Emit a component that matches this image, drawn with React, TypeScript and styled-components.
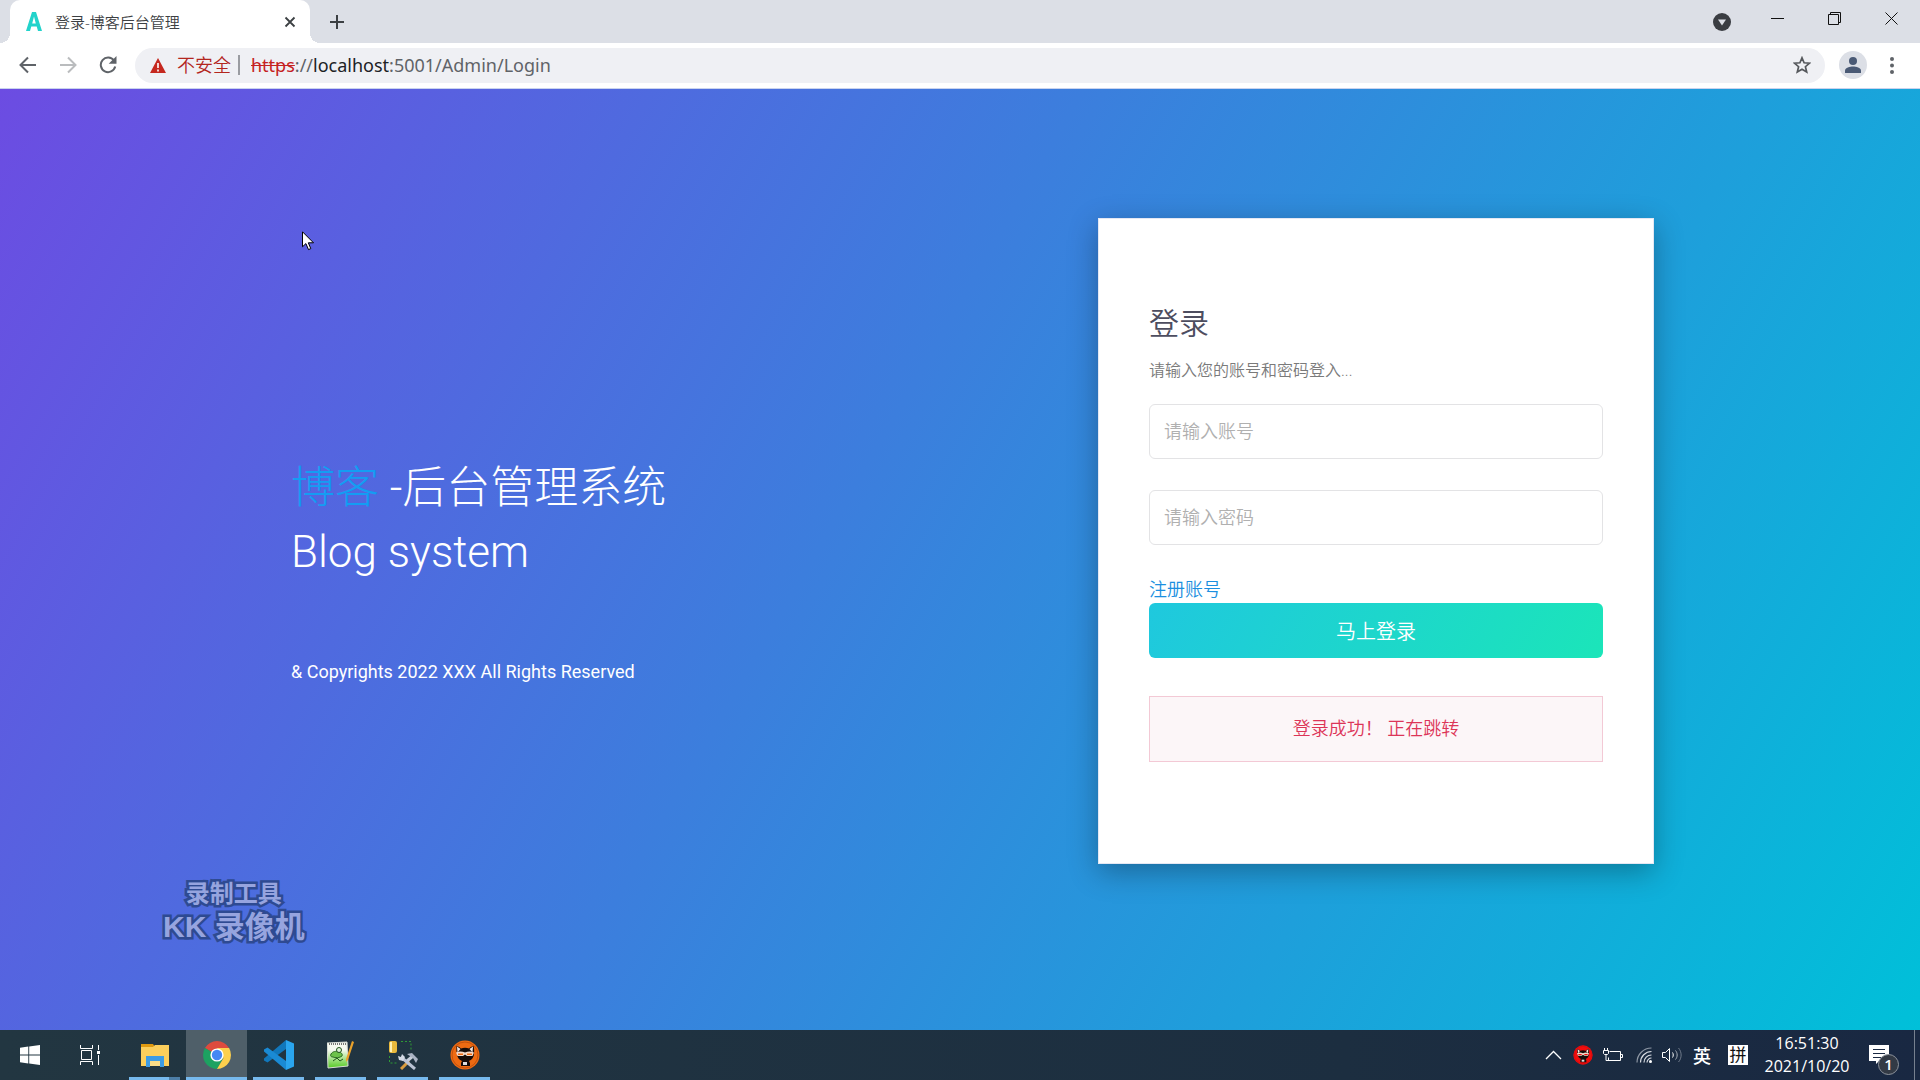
import React from "react";
import styled, { createGlobalStyle, css } from "styled-components";

const uiFont = `"Open Sans", "Noto Sans CJK SC", sans-serif`;
const pageFont = `Roboto, "Noto Sans CJK SC", sans-serif`;

const GlobalStyle = createGlobalStyle`
  * { box-sizing: border-box; }
  body { margin: 0; font-family: ${uiFont}; }
  button { border: 0; padding: 0; background: none; font-family: inherit; cursor: pointer; }
`;

const Screen = styled.div`
  position: relative;
  display: flex;
  flex-direction: column;
  min-height: 100vh;
`;

/* ---------- browser chrome ---------- */

const TabStrip = styled.header`
  display: flex;
  align-items: stretch;
  height: 43px;
  padding-left: 10px;
  background: #dcdfe6;
`;

const Tab = styled.div`
  position: relative;
  display: flex;
  align-items: center;
  gap: 11px;
  width: 300px;
  padding: 0 14px 0 15px;
  border-radius: 10px 10px 0 0;
  background: #fff;
  color: #3c4043;
  font-size: 15px;

  &::before,
  &::after {
    content: "";
    position: absolute;
    bottom: 0;
    width: 10px;
    height: 10px;
  }
  &::before {
    left: -10px;
    background: radial-gradient(circle at 0 0, transparent 10px, #fff 10px);
  }
  &::after {
    right: -10px;
    background: radial-gradient(circle at 100% 0, transparent 10px, #fff 10px);
  }
`;

const TabTitle = styled.span`
  flex: 1;
  font-weight: 350;
  line-height: 20px;
  white-space: nowrap;
`;

const IconButton = styled.button<{ $size: number; $height?: number }>`
  display: flex;
  flex: none;
  align-items: center;
  justify-content: center;
  width: ${(p) => p.$size}px;
  height: ${(p) => p.$height ?? p.$size}px;
`;

const NewTab = styled.div`
  display: flex;
  flex: 1;
  align-items: center;
  padding-left: 15px;
`;

const WindowControls = styled.div`
  display: flex;
  align-items: flex-start;
`;

const Toolbar = styled.nav`
  display: flex;
  align-items: center;
  height: 46px;
  padding: 0 13px 1px 8px;
  border-bottom: 1px solid #c9d3ee;
  background: #fff;
`;

const Omnibox = styled.div`
  display: flex;
  flex: 1;
  align-items: center;
  height: 35px;
  margin: 0 14px 0 7px;
  padding: 0 8px 0 15px;
  border-radius: 18px;
  background: #eff0f4;
  font-size: 18px;
  line-height: 24px;
`;

const Insecure = styled.span`
  margin-left: 11px;
  color: #b3261e;
  font-weight: 350;
`;

const Separator = styled.span`
  width: 2px;
  height: 20px;
  margin: 0 11px 0 7px;
  background: #9a9ca1;
`;

const Address = styled.span`
  flex: 1;
  color: #5f6368;
  font-family: "Noto Sans", sans-serif;
  s { color: #c5221f; }
  b { color: #202124; font-weight: 400; }
`;

const Avatar = styled.button`
  display: flex;
  align-items: center;
  justify-content: center;
  width: 28px;
  height: 28px;
  margin-right: 10px;
  border-radius: 50%;
  background: #dcdfe6;
`;

/* ---------- login page ---------- */

const Page = styled.main`
  position: relative;
  flex: 1;
  padding: 129px 24px;
  background: linear-gradient(120deg, #6c4ce2 0%, #3c7edd 44%, #00c0d9 100%);
  font-family: ${pageFont};
`;

const Container = styled.div`
  display: flex;
  align-items: center;
  justify-content: space-between;
  max-width: 1388px;
  margin: 0 auto;
  padding-left: 25px;
`;

const Intro = styled.section`
  padding-top: 58px;
  color: #fff;
`;

const Headline = styled.h1`
  margin: 0 0 76px;
  font-size: 44px;
  font-weight: 300;
  line-height: 64px;
`;

const Accent = styled.span`
  color: #139df3;
`;

const Copyright = styled.p`
  margin: 0;
  font-size: 18px;
  line-height: 24px;
`;

const Card = styled.form`
  width: 556px;
  padding: 87px 50px 101px;
  border: 1px solid #e4e7f3;
  background: #fff;
  box-shadow: 0 8px 28px rgba(0, 0, 0, 0.3);
  font-weight: 350;
`;

const CardTitle = styled.h2`
  margin: 0 0 17px;
  color: #4d4d5f;
  font-size: 30px;
  font-weight: 350;
  line-height: 36px;
`;

const Hint = styled.p`
  margin: 0 0 21px;
  color: #7a7a7a;
  font-size: 16px;
  line-height: 24px;
`;

const Field = styled.input`
  display: block;
  width: 100%;
  height: 55px;
  margin-bottom: 31px;
  padding: 0 14px;
  border: 1px solid #e3e3e5;
  border-radius: 6px;
  background: #fff;
  color: #4d4d5f;
  font-family: inherit;
  font-size: 18px;
  font-weight: 350;
  &::placeholder { color: #b0b0b0; opacity: 1; }
`;

const RegisterLink = styled.a`
  display: block;
  width: fit-content;
  color: #1c8fe0;
  font-size: 18px;
  line-height: 27px;
  text-decoration: none;
`;

const Submit = styled.button`
  display: block;
  width: 100%;
  height: 55px;
  border-radius: 6px;
  background: linear-gradient(120deg, #1fc8de 0%, #1be5b9 100%);
  color: #fff;
  font-size: 20px;
  font-weight: 350;
`;

const Alert = styled.div`
  margin-top: 38px;
  padding: 20px;
  border: 1px solid #f3c9d5;
  background: #fcf6f8;
  color: #dc3558;
  font-size: 18px;
  line-height: 24px;
  text-align: center;
`;

const Watermark = styled.div`
  position: absolute;
  left: 163px;
  bottom: 85px;
  color: #96a4df;
  font-family: "Liberation Sans", "Noto Sans CJK SC", sans-serif;
  font-size: 30px;
  font-weight: 700;
  line-height: 36px;
  text-align: center;
  -webkit-text-stroke: 5px #2e4a92;
  paint-order: stroke fill;
`;

const WatermarkSmall = styled.div`
  font-size: 24px;
  line-height: 30px;
`;

const Pointer = styled.svg`
  position: absolute;
  left: 302px;
  top: 231px;
`;

/* ---------- task bar ---------- */

const Taskbar = styled.footer`
  display: flex;
  height: 50px;
  background: linear-gradient(90deg, #223641, #1c2e40 70%, #192842);
  color: #fff;
`;

const TaskButton = styled.button<{ $active?: boolean; $open?: boolean }>`
  position: relative;
  display: flex;
  align-items: center;
  justify-content: center;
  width: ${(p) => (p.$open ? 61 : 60)}px;
  height: 50px;
  ${(p) =>
    p.$open &&
    css`
      background: ${p.$active ? "#4f5f69" : "transparent"};
      &::after {
        content: "";
        position: absolute;
        bottom: 0;
        left: ${p.$active ? 0 : 5}px;
        right: ${p.$active ? 0 : 5}px;
        height: 3px;
        background: #76b9ed;
      }
    `}
`;

const StackedTaskButton = styled(TaskButton)`
  &::after {
    background: linear-gradient(90deg, #76b9ed 40px, #4d7ea6 40px);
  }
`;

const RunningApps = styled.div`
  display: flex;
  gap: 1px;
  margin-left: 4px;
`;

const Tray = styled.div`
  display: flex;
  align-items: center;
  margin-left: auto;
`;

const TrayItem = styled.button<{ $width: number }>`
  display: flex;
  align-items: center;
  justify-content: center;
  width: ${(p) => p.$width}px;
  height: 50px;
  color: #fff;
  font-size: 18px;
  font-weight: 500;
`;

const Pinyin = styled.span`
  width: 20px;
  height: 20px;
  background: #fff;
  color: #111;
  font-size: 17px;
  font-weight: 400;
  line-height: 20px;
`;

const Clock = styled.time`
  width: 100px;
  font-size: 16px;
  line-height: 23px;
  text-align: center;
`;

const Notifications = styled.button`
  position: relative;
  display: flex;
  align-items: flex-start;
  width: 58px;
  height: 50px;
  margin-right: 5px;
  padding: 15px 0 0 12px;
  border-right: 1px solid #76808f;
`;

const Count = styled.span`
  position: absolute;
  left: 21px;
  top: 24px;
  width: 21px;
  height: 21px;
  border: 1px solid #8d939c;
  border-radius: 50%;
  background: #333a45;
  color: #fff;
  font-size: 15px;
  font-weight: 600;
  line-height: 19px;
  text-align: center;
`;

const MaskedCat = ({ size, fill, edge }: { size: number; fill: string; edge: string }) => (
  <svg width={size} height={size} viewBox="0 0 30 30">
    <circle cx="15" cy="15" r="14.5" fill={fill} />
    <circle cx="15" cy="15" r="13" fill="none" stroke={edge} />
    <path d="M6.500 6c2 .5 3.500 1.500 4.500 2.500 2.500-1 5.500-1 8 0 1-1 2.500-2 4.500-2.500.8 3 .8 5 .5 7.500 0 4-2.500 6.500-5 7.500l1 2v3h-9v-3l1-2c-2.500-1-5-3.500-5-7.500-.7-2.500-.7-4.500-.5-7.500z" fill="#160c0a" />
    <path d="M7 6.500l3.500 2.500L7.500 12.500zM23 6.500l-3.500 2.500 3 3.500z" fill="#f4e6df" />
    <path d="M6 12.500c3-1.500 6-1.500 9 0 3-1.500 6-1.500 9 0l-1.500 3.500h-5.500l-2-1.500-2 1.500H7.500z" fill="#f4d9c8" />
    <path d="M8 13.500h5v1.500H8zM17 13.500h5v1.500h-5z" fill={fill} />
    <rect x="13" y="22" width="4" height="3" fill="#ddd" />
  </svg>
);

export default function App() {
  return (
    <Screen>
      <GlobalStyle />
      <TabStrip>
        <Tab>
          <svg width="19" height="19" viewBox="0 0 19 19">
            <path
              d="M7 0h4l6 19h-4l-1.300-4.500H6.300L5 19H1zM9 4.500L7.200 11.500h3.600z"
              fill="#22d3cb"
              fillRule="evenodd"
            />
          </svg>
          <TabTitle>登录-博客后台管理</TabTitle>
          <IconButton $size={12} aria-label="关闭标签页">
            <svg width="12" height="12" viewBox="0 0 12 12">
              <path d="M1.500 1.500l9 9M10.500 1.500l-9 9" stroke="#3c4043" strokeWidth="1.800" />
            </svg>
          </IconButton>
        </Tab>
        <NewTab>
          <IconButton $size={24} aria-label="新建标签页">
            <svg width="16" height="16" viewBox="0 0 16 16">
              <path d="M8 1v14M1 8h14" stroke="#3c4043" strokeWidth="2" />
            </svg>
          </IconButton>
        </NewTab>
        <WindowControls>
          <IconButton $size={55} $height={43} aria-label="搜索标签页">
            <svg width="18" height="18" viewBox="0 0 18 18">
              <circle cx="9" cy="9" r="9" fill="#3a3d42" />
              <path d="M5 6.500h8L9 12.500z" fill="#dcdfe6" />
            </svg>
          </IconButton>
          <IconButton $size={57} $height={37} aria-label="最小化">
            <svg width="13" height="13" viewBox="0 0 13 13">
              <path d="M0 6.500h13" stroke="#111" />
            </svg>
          </IconButton>
          <IconButton $size={57} $height={37} aria-label="还原">
            <svg width="13" height="13" viewBox="0 0 13 13" fill="none" stroke="#111">
              <path d="M.5 2.500h10v10H.5zM2.500 2.500v-2h10v10h-2" />
            </svg>
          </IconButton>
          <IconButton $size={57} $height={37} aria-label="关闭">
            <svg width="13" height="13" viewBox="0 0 13 13">
              <path d="M.5.5l12 12M12.500.5l-12 12" stroke="#111" />
            </svg>
          </IconButton>
        </WindowControls>
      </TabStrip>

      <Toolbar>
        <IconButton $size={40} aria-label="后退">
          <svg width="18" height="18" viewBox="0 0 18 18" fill="none" stroke="#5f6368" strokeWidth="2">
            <path d="M17 9H2M9 1.500L1.500 9 9 16.500" />
          </svg>
        </IconButton>
        <IconButton $size={40} aria-label="前进">
          <svg width="18" height="18" viewBox="0 0 18 18" fill="none" stroke="#babcbe" strokeWidth="2">
            <path d="M1 9h15M9 1.500L16.500 9 9 16.500" />
          </svg>
        </IconButton>
        <IconButton $size={40} aria-label="重新加载">
          <svg width="18" height="18" viewBox="0 0 18 18">
            <path d="M15 4.500A7.300 7.300 0 1 0 16.200 10.500" fill="none" stroke="#5f6368" strokeWidth="2" />
            <path d="M17.500 0v7.800H9.700z" fill="#5f6368" />
          </svg>
        </IconButton>
        <Omnibox>
          <svg width="16" height="15" viewBox="0 0 16 15">
            <path d="M8 0l8 15H0z" fill="#c5281f" />
            <path d="M8 5v5M8 11.500v2" stroke="#fff" strokeWidth="1.600" />
          </svg>
          <Insecure>不安全</Insecure>
          <Separator />
          <Address>
            <s>https</s>://<b>localhost</b>:5001/Admin/Login
          </Address>
          <IconButton $size={30} aria-label="收藏">
            <svg width="18" height="18" viewBox="0 0 18 18">
              <path
                d="M9 1.800l2.100 5 5.400.4-4.100 3.500 1.300 5.300L9 13.200 4.300 16l1.300-5.300L1.500 7.200l5.400-.4z"
                fill="none"
                stroke="#55585c"
                strokeWidth="1.700"
              />
            </svg>
          </IconButton>
        </Omnibox>
        <Avatar aria-label="个人资料">
          <svg width="16" height="16" viewBox="0 0 16 16" fill="#4a5a75">
            <circle cx="8" cy="4" r="4" />
            <path d="M0 16v-2.500C0 10.700 5 9.500 8 9.500s8 1.200 8 4V16z" />
          </svg>
        </Avatar>
        <IconButton $size={30} aria-label="菜单">
          <svg width="4" height="17" viewBox="0 0 4 17" fill="#5f6368">
            <circle cx="2" cy="2" r="2" />
            <circle cx="2" cy="8.500" r="2" />
            <circle cx="2" cy="15" r="2" />
          </svg>
        </IconButton>
      </Toolbar>

      <Page>
        <Container>
          <Intro>
            <Headline>
              <Accent>博客</Accent> -后台管理系统
              <br />
              Blog system
            </Headline>
            <Copyright>&amp; Copyrights 2022 XXX All Rights Reserved</Copyright>
          </Intro>
          <Card onSubmit={(e) => e.preventDefault()}>
            <CardTitle>登录</CardTitle>
            <Hint>请输入您的账号和密码登入...</Hint>
            <Field type="text" placeholder="请输入账号" aria-label="账号" />
            <Field type="password" placeholder="请输入密码" aria-label="密码" />
            <RegisterLink href="#register">注册账号</RegisterLink>
            <Submit type="submit">马上登录</Submit>
            <Alert role="alert">登录成功！ 正在跳转</Alert>
          </Card>
        </Container>
        <Watermark>
          <WatermarkSmall>录制工具</WatermarkSmall>
          KK 录像机
        </Watermark>
      </Page>

      <Taskbar>
        <TaskButton aria-label="开始">
          <svg width="20" height="20" viewBox="0 0 20 20" fill="#fff">
            <path d="M0 2.800l8.300-1.200v8H0zM9.200 1.500L20 0v9.600H9.200zM0 10.500h8.300v8L0 17.300zM9.200 10.500H20V20L9.200 18.600z" />
          </svg>
        </TaskButton>
        <TaskButton aria-label="任务视图">
          <svg width="20" height="20" viewBox="0 0 20 20" fill="none" stroke="#fff">
            <path d="M.5 0v3.500h12V0M.5 20v-3.500h12V20M1.500 5.500h10v9h-10zM18.500 0v5M18.500 10v10" />
            <path d="M17 6h3v3h-3z" fill="#fff" stroke="none" />
          </svg>
        </TaskButton>
        <RunningApps>
          <StackedTaskButton $open aria-label="文件资源管理器">
            <svg width="28" height="24" viewBox="0 0 28 24">
              <path d="M0 1h12l2 3H0z" fill="#e09a10" />
              <path d="M0 4h12l2-2h14v21H0z" fill="#fccf5c" />
              <path d="M5 13h18v11h-4v-6H9v6H5z" fill="#3c9be4" />
              <path d="M9 18h10v5H9z" fill="#fbdc86" />
            </svg>
          </StackedTaskButton>
          <TaskButton $open $active aria-label="Chrome">
            <svg width="28" height="28" viewBox="0 0 28 28">
              <path d="M14 14L1.900 7A14 14 0 0 1 26.100 7z" fill="#dd4b3e" />
              <path d="M14 14L1.900 7A14 14 0 0 0 14 28l6-10.500z" fill="#1da261" />
              <path d="M14 7h12.100A14 14 0 0 1 14 28l6.500-11z" fill="#fdd04d" />
              <circle cx="14" cy="14" r="6.600" fill="#fff" />
              <circle cx="14" cy="14" r="5.200" fill="#4487f3" />
            </svg>
          </TaskButton>
          <TaskButton $open aria-label="Visual Studio Code">
            <svg width="30" height="30" viewBox="0 0 30 30">
              <path d="M22 0v9L3.500 22.500 0 20.500v-2z" fill="#1177bb" />
              <path d="M22 30v-9L3.500 7.500 0 9.500v2z" fill="#1a8ad4" />
              <path d="M22 0l8 3.500v23L22 30z" fill="#2aa5ee" />
            </svg>
          </TaskButton>
          <TaskButton $open aria-label="Notepad++">
            <svg width="28" height="28" viewBox="0 0 28 28">
              <defs>
                <linearGradient id="page" x1="0" y1="0" x2="0" y2="1">
                  <stop offset=".3" stopColor="#f6faf0" />
                  <stop offset="1" stopColor="#55c924" />
                </linearGradient>
              </defs>
              <path d="M0 2l20-1 1 24-20 2z" fill="url(#page)" stroke="#d8dcd6" />
              <path d="M2 3h17" stroke="#777" strokeWidth="2" strokeDasharray="1 1" />
              <path d="M4 13c2-3 5-3 7-2 3 0 5 2 4 4-2 2-7 2-9 1-2 0-3-1-2-3z" fill="#6cc24a" stroke="#2c6b22" />
              <circle cx="12" cy="9" r="2.500" fill="#dff0d8" stroke="#20551b" />
              <path d="M6 20l4-3 3 3 3-2" fill="none" stroke="#20551b" />
              <path d="M27 1l-6 18-2 2V18L25 0z" fill="#e9a12b" />
            </svg>
          </TaskButton>
          <TaskButton $open aria-label="SQL Server Management Studio">
            <svg width="30" height="30" viewBox="0 0 30 30">
              <rect x="1" y="1" width="8" height="12" rx="2" fill="#e9b93d" />
              <path d="M3 2v10" stroke="#fff0b5" strokeWidth="2" />
              <path d="M13 1.500h10v9M1.500 16v7h9" fill="none" stroke="#2f9a36" strokeDasharray="2 2" />
              <path d="M13 29l8-8" stroke="#d99b3e" strokeWidth="3" />
              <path d="M19 21l6-5" stroke="#c5ccd8" strokeWidth="3" />
              <path d="M19 14l5-1 6 6-2 4-3-5z" fill="#aab3c4" />
              <path d="M13 17l14 12" stroke="#b9c2d3" strokeWidth="3" />
              <path d="M10 16l3 1 1-3 3 3-2 4-4-1z" fill="#d3d9e4" />
            </svg>
          </TaskButton>
          <TaskButton $open aria-label="KK 录像机">
            <MaskedCat size={30} fill="#ee6a12" edge="#c4520c" />
          </TaskButton>
        </RunningApps>

        <Tray>
          <TrayItem $width={32} aria-label="显示隐藏的图标">
            <svg width="17" height="10" viewBox="0 0 17 10">
              <path d="M1 9l7.500-7.500L16 9" fill="none" stroke="#fff" strokeWidth="1.300" />
            </svg>
          </TrayItem>
          <TrayItem $width={28} aria-label="录像机">
            <MaskedCat size={20} fill="#f20d0d" edge="#d30a0a" />
          </TrayItem>
          <TrayItem $width={32} aria-label="电池">
            <svg width="20" height="14" viewBox="0 0 20 14" fill="none" stroke="#fff">
              <path d="M6.500 3.500h11v9h-12v-3M18 6.500h1.500v3H18M1.500 0v2M4.500 0v2M.5 2.500h5v3l-1 1h-3l-1-1zM3 7v5.500h3" />
            </svg>
          </TrayItem>
          <TrayItem $width={30} aria-label="网络">
            <svg width="17" height="17" viewBox="0 0 17 17" fill="none" stroke="#d9dde3" strokeWidth="1.200">
              <path d="M1 15.500A14.500 14.500 0 0 1 15.500 1" stroke="#8f98a5" />
              <path d="M4.500 15.500a11 11 0 0 1 11-11M8 15.500A7.500 7.500 0 0 1 15.500 8M11 15.500a4.500 4.500 0 0 1 4.500-4.500" />
              <circle cx="14.500" cy="14.500" r="1.500" fill="#fff" stroke="none" />
            </svg>
          </TrayItem>
          <TrayItem $width={26} aria-label="音量">
            <svg width="21" height="18" viewBox="0 0 21 18" fill="none" stroke="#fff">
              <path d="M.5 6.500h3l4-4v13l-4-4h-3z" />
              <path d="M10.500 6.500c1 1.500 1 3.500 0 5" />
              <path d="M13.500 4.500c2.200 2.500 2.200 6.500 0 9" stroke="#aab1bb" />
              <path d="M16.500 2c3.500 4 3.500 10 0 14" stroke="#6f7a8a" />
            </svg>
          </TrayItem>
          <TrayItem $width={34}>英</TrayItem>
          <TrayItem $width={38}>
            <Pinyin>拼</Pinyin>
          </TrayItem>
          <Clock>
            16:51:30
            <br />
            2021/10/20
          </Clock>
          <Notifications aria-label="通知">
            <svg width="20" height="20" viewBox="0 0 20 20">
              <path d="M0 0h20v16H10l-3 3v-3H0z" fill="#fff" />
              <path d="M4 4.500h12M4 8.500h12M4 12.500h8" stroke="#1a2942" />
            </svg>
            <Count>1</Count>
          </Notifications>
        </Tray>
      </Taskbar>

      <Pointer width="13" height="20" viewBox="0 0 13 20" aria-hidden="true">
        <path d="M.5.8v15l3.400-3.200 2.600 6 2.300-1-2.500-5.800h5.200z" fill="#fff" stroke="#000" />
      </Pointer>
    </Screen>
  );
}
